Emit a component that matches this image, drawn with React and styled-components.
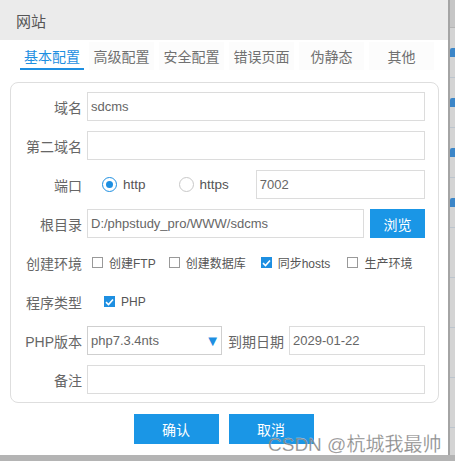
import React from "react";
import styled, { createGlobalStyle } from "styled-components";

const Global = createGlobalStyle`
  html, body { margin: 0; padding: 0; background: #c9c9c9; }
  body { font-family: "Liberation Sans", "Noto Sans CJK SC", sans-serif; }
  * { box-sizing: border-box; }
`;

const Screen = styled.div`
  width: 455px;
  height: 461px;
  display: flex;
  flex-direction: column;
  background: #b4b4b4;
  overflow: hidden;
`;

const Top = styled.div`
  display: flex;
  height: 455px;
`;

const Dialog = styled.div`
  position: relative;
  width: 448px;
  height: 455px;
  background: #fff;
  display: flex;
  flex-direction: column;
`;

const Side = styled.div`
  flex: 1;
  border-left: 2px solid #a4a4a4;
  background: #d4d4d4;
  display: flex;
  flex-direction: column;
`;

const SideHead = styled.div`
  height: 28px;
  background: #c6c6c6;
  border-bottom: 1px solid #b4b4b4;
`;

const SideRow = styled.div`
  height: 50px;
  border-bottom: 1px solid #bcc5ce;
  display: flex;
  align-items: center;
`;

const SideIcon = styled.div`
  width: 5px;
  height: 9px;
  background: ${p => (p.$show ? "#3b86c8" : "transparent")};
  border-radius: 2px 0 0 0;
`;

const Header = styled.div`
  height: 40px;
  background: #ebebeb;
  display: flex;
  align-items: center;
  padding-left: 16px;
  font-size: 15px;
  color: #555;
`;

const Tabs = styled.div`
  display: flex;
  gap: 5px;
  margin-top: 2px;
  padding-left: 20px;
  height: 28px;
`;

const Tab = styled.div`
  width: ${p => p.$w || 65}px;
  height: 28px;
  display: flex;
  align-items: center;
  justify-content: center;
  font-size: 14px;
  color: ${p => (p.$active ? "#1e8fe1" : "#707070")};
  background: ${p => (p.$active ? "#fff" : "#fcfcfc")};
  border-bottom: 2px solid ${p => (p.$active ? "#1e8fe1" : "transparent")};
  padding-top: 1px;
`;

const Panel = styled.div`
  margin: 12px 9px 0 10px;
  border: 1px solid #dedede;
  border-radius: 8px;
  padding: 9px 13px 8px 0;
  display: flex;
  flex-direction: column;
  gap: 10px;
`;

const Row = styled.div`
  display: flex;
  align-items: center;
  height: 29px;
`;

const Label = styled.div`
  width: ${p => p.$w || 71}px;
  flex: none;
  text-align: right;
  font-size: 14px;
  color: #666;
  margin-right: 5px;
`;

const Input = styled.div`
  flex: ${p => (p.$w ? "none" : "1")};
  width: ${p => (p.$w ? `${p.$w}px` : "auto")};
  height: 29px;
  border: 1px solid #dcdcdc;
  background: #fff;
  display: flex;
  align-items: center;
  padding-left: 3px;
  margin-left: ${p => p.$ml || 0}px;
  font-size: 13px;
  color: #666;
`;

const Select = styled(Input)`
  border-color: #cfcfcf;
  justify-content: space-between;
  padding-right: 1px;
`;

const Arrow = styled.span`
  color: #1e8fe1;
  font-size: 15px;
  line-height: 1;
`;

const Radio = styled.span`
  width: 15px;
  height: 15px;
  border-radius: 50%;
  border: 1px solid ${p => (p.$on ? "#1e8fe1" : "#c8c8c8")};
  display: inline-flex;
  align-items: center;
  justify-content: center;
  margin-left: ${p => p.$ml}px;
  margin-right: 6px;
  &::after {
    content: "";
    width: 7px;
    height: 7px;
    border-radius: 50%;
    background: ${p => (p.$on ? "#1e8fe1" : "transparent")};
  }
`;

const OptText = styled.span`
  font-size: ${p => p.$fs || 14}px;
  color: #555;
`;

const Box = styled.span`
  width: 11px;
  height: 11px;
  border: 1px solid ${p => (p.$on ? "#1e8fe1" : "#999")};
  background: ${p => (p.$on ? "#1e8fe1" : "#fff")};
  display: inline-flex;
  align-items: center;
  justify-content: center;
  margin-left: ${p => p.$ml}px;
  margin-right: 6px;
  flex: none;
`;

const Browse = styled.div`
  width: 55px;
  height: 29px;
  margin-left: 6px;
  background: #1a96e6;
  color: #fff;
  font-size: 14px;
  display: flex;
  align-items: center;
  justify-content: center;
`;

const Footer = styled.div`
  display: flex;
  justify-content: center;
  gap: 10px;
  margin-top: 11px;
  padding-right: 1px;
`;

const Btn = styled.div`
  width: 85px;
  height: 30px;
  background: #1a96e6;
  color: #fff;
  font-size: 14px;
  display: flex;
  align-items: center;
  justify-content: center;
`;

const Watermark = styled.div`
  position: absolute;
  left: 268px;
  top: 429px;
  font-size: 19px;
  color: rgba(120, 120, 120, 0.85);
  white-space: nowrap;
  -webkit-text-stroke: 0.3px rgba(255,255,255,0.6);
`;

const Check = () => (
  <svg width="9" height="8" viewBox="0 0 9 8">
    <path d="M1 4.2 L3.5 6.5 L8 1.5" fill="none" stroke="#fff" strokeWidth="1.6" />
  </svg>
);

const sideRows = [true, true, true, true, false, false, false, false];

export default function App() {
  return (
    <Screen>
      <Global />
      <Top>
        <Dialog>
          <Header>网站</Header>
          <Tabs>
            <Tab $active $w={64}>基本配置</Tab>
            <Tab>高级配置</Tab>
            <Tab>安全配置</Tab>
            <Tab>错误页面</Tab>
            <Tab>伪静态</Tab>
            <Tab>其他</Tab>
          </Tabs>
          <Panel>
            <Row>
              <Label>域名</Label>
              <Input>sdcms</Input>
            </Row>
            <Row>
              <Label>第二域名</Label>
              <Input />
            </Row>
            <Row>
              <Label>端口</Label>
              <Radio $on $ml={15} />
              <OptText $fs={13.5}>http</OptText>
              <Radio $ml={33} />
              <OptText $fs={13.5}>https</OptText>
              <Input $w={169} $ml={27}>7002</Input>
            </Row>
            <Row>
              <Label>根目录</Label>
              <Input>D:/phpstudy_pro/WWW/sdcms</Input>
              <Browse>浏览</Browse>
            </Row>
            <Row>
              <Label>创建环境</Label>
              <Box $ml={5} />
              <OptText $fs={12}>创建FTP</OptText>
              <Box $ml={13} />
              <OptText $fs={12}>创建数据库</OptText>
              <Box $on $ml={15}><Check /></Box>
              <OptText $fs={12}>同步hosts</OptText>
              <Box $ml={17} />
              <OptText $fs={12}>生产环境</OptText>
            </Row>
            <Row>
              <Label>程序类型</Label>
              <Box $on $ml={17}><Check /></Box>
              <OptText $fs={12}>PHP</OptText>
            </Row>
            <Row>
              <Label>PHP版本</Label>
              <Select $w={135}>
                php7.3.4nts
                <Arrow>▼</Arrow>
              </Select>
              <Label $w={62}>到期日期</Label>
              <Input>2029-01-22</Input>
            </Row>
            <Row>
              <Label>备注</Label>
              <Input />
            </Row>
          </Panel>
          <Footer>
            <Btn>确认</Btn>
            <Btn>取消</Btn>
          </Footer>
          <Watermark>CSDN @杭城我最帅</Watermark>
        </Dialog>
        <Side>
          <SideHead />
          {sideRows.map((s, i) => (
            <SideRow key={i}><SideIcon $show={s} /></SideRow>
          ))}
        </Side>
      </Top>
    </Screen>
  );
}
